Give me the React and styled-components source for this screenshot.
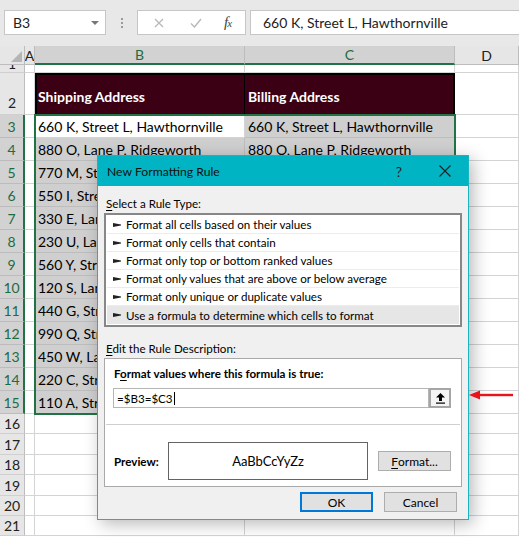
import React from 'react';
import styled, { createGlobalStyle } from 'styled-components';

const Global = createGlobalStyle`
  html, body { margin: 0; padding: 0; background: #fff; }
  body { width: 519px; height: 537px; overflow: hidden; font-family: Lato, "Liberation Sans", sans-serif; }
  * { box-sizing: border-box; }
`;

const Page = styled.div`
  position: relative;
  width: 519px;
  height: 537px;
  overflow: hidden;
  background: #fff;
`;

/* ---------- toolbar ---------- */
const Toolbar = styled.div`
  height: 46px;
  padding: 10px 0 0 4px;
  background: #e8e8e8;
  display: flex;
  align-items: flex-start;
  overflow: hidden;
`;

const Box = styled.div`
  height: 25px;
  background: #fff;
  border: 1px solid #c6c6c6;
  display: flex;
  align-items: center;
  font-family: Lato, sans-serif;
  font-size: 14px;
  color: #222;
`;

const NameBox = styled(Box)`
  width: 102px;
  padding: 0 6px 0 8px;
  justify-content: space-between;
`;

const Caret = styled.span`
  width: 0;
  height: 0;
  border-left: 4px solid transparent;
  border-right: 4px solid transparent;
  border-top: 4px solid #777;
`;

const Grip = styled.div`
  width: 31px;
  height: 25px;
  display: flex;
  flex-direction: column;
  align-items: center;
  justify-content: center;
  gap: 2px;
  & > span { width: 2px; height: 2px; background: #9a9a9a; }
`;

const FuncBox = styled(Box)`
  width: 109px;
  padding-left: 15px;
  gap: 0;
`;

const FuncIcon = styled.span`
  width: ${p => p.$w}px;
  display: flex;
  justify-content: center;
  align-items: center;
`;

const Fx = styled.span`
  font-family: "Liberation Serif", serif;
  font-style: italic;
  font-size: 15px;
  color: #444;
  letter-spacing: -1px;
  & > small { font-size: 11px; }
`;

const FormulaBox = styled(Box)`
  flex: 1;
  margin-left: 4px;
  margin-right: -2px;
  padding-left: 12px;
`;

/* ---------- sheet ---------- */
const Sheet = styled.div`
  position: relative;
  display: grid;
  grid-template-columns: 25px 10px 210px 210px 64px;
  grid-template-rows: 19px 8px 42px repeat(13, 23px) repeat(6, 20.4px);
`;

const Corner = styled.div`
  background: #e6e6e6;
  border-right: 1px solid #bdbdbd;
  border-bottom: 1px solid #bdbdbd;
  position: relative;
  display: flex;
  justify-content: flex-end;
  align-items: flex-end;
  padding: 0 2px 2px 0;
`;

const ColHead = styled.div`
  background: ${p => (p.$sel ? '#d2d2d2' : '#e6e6e6')};
  border-right: 1px solid #bdbdbd;
  border-bottom: ${p => (p.$sel ? '2px solid #217346' : '1px solid #bdbdbd')};
  color: ${p => (p.$sel ? '#1e6b3e' : '#222')};
  font-size: 14px;
  display: flex;
  justify-content: center;
  align-items: center;
  overflow: hidden;
  white-space: nowrap;
`;

const RowHead = styled.div`
  background: ${p => (p.$sel ? '#d2d2d2' : '#e6e6e6')};
  border-right: ${p => (p.$sel ? '2px solid #217346' : '1px solid #bdbdbd')};
  border-bottom: 1px solid ${p => (p.$sel ? '#bcbcbc' : '#d0d0d0')};
  color: ${p => (p.$sel ? '#1e6b3e' : '#222')};
  font-size: 14px;
  display: flex;
  justify-content: center;
  align-items: flex-end;
  padding-bottom: ${p => p.$pb}px;
  overflow: hidden;
  line-height: 16px;
`;

const tones = {
  white: '#ffffff',
  sel: '#cfcfcf',
  head: '#3b0014',
};

const Cell = styled.div`
  background: ${p => tones[p.$tone]};
  border-right: 1px solid ${p => (p.$tone === 'sel' ? '#bdbdbd' : '#d4d4d4')};
  border-bottom: 1px solid ${p => (p.$tone === 'sel' ? '#bdbdbd' : '#d4d4d4')};
  font-size: 14px;
  color: #000;
  display: flex;
  align-items: flex-end;
  padding: 0 3px 2px 3px;
  white-space: nowrap;
  overflow: hidden;
  line-height: 17px;
`;

const HeadCell = styled(Cell)`
  color: #fff;
  font-weight: 700;
  padding-bottom: 10px;
  border-top: 2px solid #000;
  border-left: ${p => (p.$first ? '2px solid #000' : 'none')};
  border-right: ${p => (p.$first ? '1px solid #000' : '2px solid #000')};
  border-bottom: none;
  padding-left: ${p => (p.$first ? '1px' : '3px')};
`;

const Selection = styled.div`
  position: absolute;
  left: 34px;
  top: 68px;
  width: 422px;
  height: 301px;
  border: 2px solid #217346;
  pointer-events: none;
`;

/* ---------- dialog ---------- */
const Dialog = styled.div`
  position: absolute;
  left: 97px;
  top: 155px;
  width: 372px;
  height: 365px;
  background: #f0f0f0;
  border: 1px solid #1cb3c0;
  box-shadow: 4px 4px 16px rgba(0, 0, 0, 0.28);
  font-family: Lato, sans-serif;
  font-size: 11.6px;
  color: #000;
  display: flex;
  flex-direction: column;
`;

const TitleBar = styled.div`
  height: 30px;
  flex-shrink: 0;
  background: #00b4c3;
  display: flex;
  align-items: center;
  padding-left: 9px;
  font-size: 12.2px;
  color: #111;
`;

const Title = styled.span`
  flex: 1;
`;

const TitleBtn = styled.span`
  width: 46px;
  height: 30px;
  display: flex;
  align-items: center;
  justify-content: center;
  font-size: 14px;
  color: #222;
`;

const Body = styled.div`
  padding: 0 6px;
  display: flex;
  flex-direction: column;
  flex: 1;
`;

const Label = styled.div`
  height: 14px;
  line-height: 14px;
  margin: ${p => p.$mt}px 0 2px 2px;
  & u { text-decoration: underline; text-underline-offset: 2px; }
`;

const List = styled.div`
  border: 2px solid #878787;
  background: #fff;
  padding: 1px;
`;

const Item = styled.div`
  height: 18px;
  display: flex;
  align-items: center;
  padding-left: 6px;
  gap: 5px;
  background: ${p => (p.$active ? '#e6e6e6' : '#fff')};
  border-bottom: ${p => (p.$last ? 'none' : '1px solid #ececec')};
`;

const DescBox = styled.div`
  border: 1px solid #a9a9a9;
  background: #fff;
  height: 129px;
  display: flex;
  flex-direction: column;
  padding: 0 1px;
`;

const BoldLine = styled.div`
  font-weight: 700;
  height: 14px;
  line-height: 14px;
  margin: 8px 0 0 8px;
  & u { text-decoration: underline; text-underline-offset: 2px; }
`;

const InputRow = styled.div`
  display: flex;
  margin: 7px 9px 0 7px;
  height: 20px;
`;

const Input = styled.div`
  flex: 1;
  border: 1px solid #b5b5b5;
  background: #fff;
  display: flex;
  align-items: center;
  padding-left: 3px;
  font-size: 11.6px;
`;

const Caretline = styled.span`
  width: 1px;
  height: 13px;
  background: #000;
  margin-left: 1px;
`;

const CollapseBtn = styled.div`
  width: 22px;
  border: 2px solid #a6a6a6;
  background: #f4f4f4;
  display: flex;
  align-items: center;
  justify-content: center;
`;

const Rule = styled.div`
  height: 1px;
  background: #cfcfcf;
  margin-top: 16px;
`;

const PreviewRow = styled.div`
  display: flex;
  align-items: center;
  margin: 17px 0 0 8px;
`;

const PreviewLabel = styled.span`
  font-weight: 700;
  width: 54px;
`;

const PreviewBox = styled.div`
  width: 200px;
  height: 38px;
  border: 1px solid #646464;
  background: #fff;
  display: flex;
  align-items: center;
  justify-content: center;
  font-size: 13px;
`;

const Button = styled.div`
  width: 73px;
  height: 20px;
  background: #e1e1e1;
  border: ${p => (p.$primary ? '2px solid #0078d7' : '1px solid #adadad')};
  display: flex;
  align-items: center;
  justify-content: center;
  font-size: 12px;
  margin-left: ${p => p.$ml || 0}px;
  & u { text-decoration: underline; text-underline-offset: 2px; }
`;

const ButtonRow = styled.div`
  display: flex;
  justify-content: flex-end;
  gap: 11px;
  margin: 5px 5px 0 0;
`;

const RedArrow = styled.svg`
  position: absolute;
  left: 469px;
  top: 390px;
`;

const Bullet = () => (
  <svg width="8" height="6" viewBox="0 0 8 6">
    <polygon points="0,1 8,2.6 8,3.4 0,5" fill="#222" />
  </svg>
);

const colB = [
  '660 K, Street L, Hawthornville',
  '880 O, Lane P, Ridgeworth',
  '770 M, Street N, Hawthornville',
  '550 I, Street J, Ridgeworth',
  '330 E, Lane F, Hawthornville',
  '230 U, Lane V, Ridgeworth',
  '560 Y, Street Z, Hawthornville',
  '120 S, Lane T, Ridgeworth',
  '440 G, Street H, Hawthornville',
  '990 Q, Street R, Ridgeworth',
  '450 W, Lane X, Hawthornville',
  '220 C, Street D, Ridgeworth',
  '110 A, Street B, Hawthornville',
];
const colC = [
  '660 K, Street L, Hawthornville',
  '880 O, Lane P, Ridgeworth',
  '770 M, Street N, Hawthornville',
  '550 I, Street J, Lakeview',
  '330 E, Lane F, Hawthornville',
  '230 U, Lane V, Ridgeworth',
  '560 Y, Street Z, Brookfield',
  '120 S, Lane T, Ridgeworth',
  '440 G, Street H, Hawthornville',
  '990 Q, Street R, Maplewood',
  '450 W, Lane X, Hawthornville',
  '220 C, Street D, Ridgeworth',
  '110 A, Street B, Hawthornville',
];

const rules = [
  'Format all cells based on their values',
  'Format only cells that contain',
  'Format only top or bottom ranked values',
  'Format only values that are above or below average',
  'Format only unique or duplicate values',
  'Use a formula to determine which cells to format',
];

export default function App() {
  const dataRows = colB.map((b, i) => {
    const n = i + 3;
    return (
      <React.Fragment key={n}>
        <RowHead $sel $pb={2}>{n}</RowHead>
        <Cell $tone="white" />
        <Cell $tone={n === 3 ? 'white' : 'sel'}>{b}</Cell>
        <Cell $tone="sel">{colC[i]}</Cell>
        <Cell $tone="white" />
      </React.Fragment>
    );
  });
  const emptyRows = [16, 17, 18, 19, 20, 21].map(n => (
    <React.Fragment key={n}>
      <RowHead $pb={1}>{n}</RowHead>
      <Cell $tone="white" />
      <Cell $tone="white" />
      <Cell $tone="white" />
      <Cell $tone="white" />
    </React.Fragment>
  ));

  return (
    <Page>
      <Global />
      <Toolbar>
        <NameBox>
          B3
          <Caret />
        </NameBox>
        <Grip>
          <span />
          <span />
          <span />
        </Grip>
        <FuncBox>
          <FuncIcon $w={12}>
            <svg width="10" height="10" viewBox="0 0 10 10">
              <path d="M1 1 L9 9 M9 1 L1 9" stroke="#b8b8b8" strokeWidth="1.3" />
            </svg>
          </FuncIcon>
          <FuncIcon $w={25} />
          <FuncIcon $w={12}>
            <svg width="12" height="10" viewBox="0 0 12 10">
              <path d="M1 5.5 L4.5 9 L11 1" stroke="#b8b8b8" strokeWidth="1.4" fill="none" />
            </svg>
          </FuncIcon>
          <FuncIcon $w={22} />
          <Fx>
            f<small>x</small>
          </Fx>
        </FuncBox>
        <FormulaBox>660 K, Street L, Hawthornville</FormulaBox>
      </Toolbar>

      <Sheet>
        <Corner>
          <svg width="11" height="11" viewBox="0 0 11 11">
            <polygon points="11,0 11,11 0,11" fill="#b5b5b5" />
          </svg>
        </Corner>
        <ColHead>A</ColHead>
        <ColHead $sel>B</ColHead>
        <ColHead $sel>C</ColHead>
        <ColHead>D</ColHead>

        <RowHead $pb={0}>1</RowHead>
        <Cell $tone="white" />
        <Cell $tone="white" />
        <Cell $tone="white" />
        <Cell $tone="white" />

        <RowHead $pb={3}>2</RowHead>
        <Cell $tone="white" />
        <HeadCell $tone="head" $first>Shipping Address</HeadCell>
        <HeadCell $tone="head">Billing Address</HeadCell>
        <Cell $tone="white" />

        {dataRows}
        {emptyRows}

        <Selection />
      </Sheet>

      <Dialog>
        <TitleBar>
          <Title>New Formatting Rule</Title>
          <TitleBtn>?</TitleBtn>
          <TitleBtn>
            <svg width="12" height="12" viewBox="0 0 12 12">
              <path d="M0.5 0.5 L11.5 11.5 M11.5 0.5 L0.5 11.5" stroke="#222" strokeWidth="1.1" />
            </svg>
          </TitleBtn>
        </TitleBar>
        <Body>
          <Label $mt={11}>
            <u>S</u>elect a Rule Type:
          </Label>
          <List>
            {rules.map((r, i) => (
              <Item key={r} $active={i === rules.length - 1} $last={i === rules.length - 1}>
                <Bullet />
                {r}
              </Item>
            ))}
          </List>
          <Label $mt={15}>
            <u>E</u>dit the Rule Description:
          </Label>
          <DescBox>
            <BoldLine>
              F<u>o</u>rmat values where this formula is true:
            </BoldLine>
            <InputRow>
              <Input>
                =$B3=$C3
                <Caretline />
              </Input>
              <CollapseBtn>
                <svg width="11" height="12" viewBox="0 0 11 12">
                  <path d="M5.5 1 L10 5.5 L7 5.5 L7 9 L4 9 L4 5.5 L1 5.5 Z" fill="#000" />
                  <rect x="1" y="10.5" width="9" height="1.2" fill="#000" />
                </svg>
              </CollapseBtn>
            </InputRow>
            <Rule />
            <PreviewRow>
              <PreviewLabel>Preview:</PreviewLabel>
              <PreviewBox>AaBbCcYyZz</PreviewBox>
              <Button $ml={10}>
                <u>F</u>ormat...
              </Button>
            </PreviewRow>
          </DescBox>
          <ButtonRow>
            <Button $primary>OK</Button>
            <Button>Cancel</Button>
          </ButtonRow>
        </Body>
      </Dialog>

      <RedArrow width="46" height="10" viewBox="0 0 46 10">
        <polygon points="0,5 11,0.5 11,9.5" fill="#e8141c" />
        <rect x="10" y="3.8" width="34" height="2.4" fill="#e8141c" />
      </RedArrow>
    </Page>
  );
}
